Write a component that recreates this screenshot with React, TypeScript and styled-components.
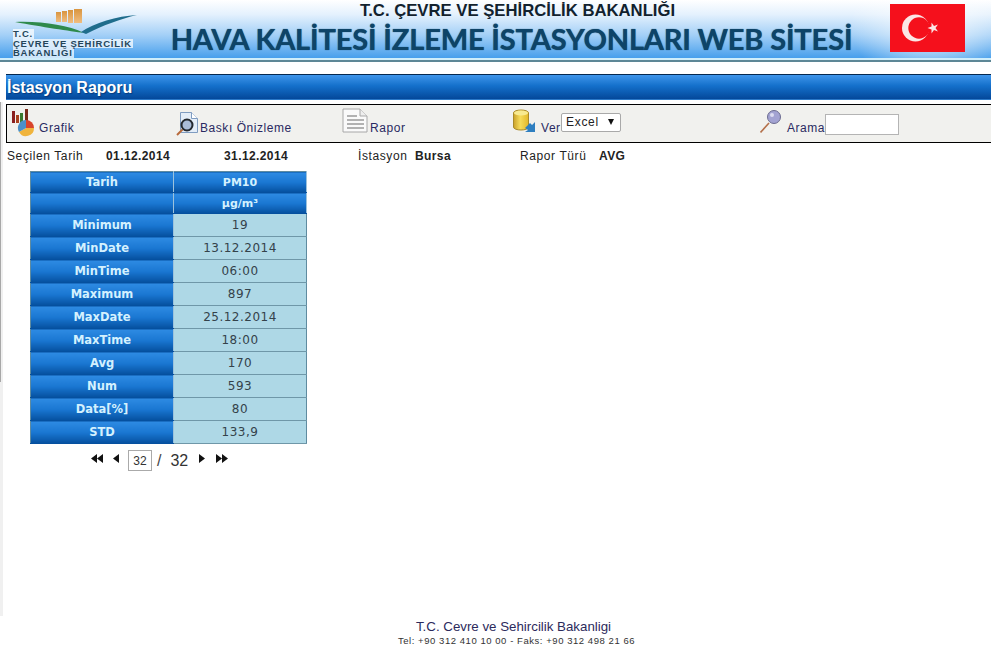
import React from 'react';
import styled, { createGlobalStyle } from 'styled-components';

const GlobalStyle = createGlobalStyle`
  html, body {
    margin: 0;
    padding: 0;
    background: #fff;
    overflow: hidden;
  }
  body {
    font-family: "Liberation Sans", Arial, sans-serif;
  }
`;

const Page = styled.div`
  width: 991px;
  height: 657px;
  display: flex;
  flex-direction: column;
`;

const Header = styled.header`
  height: 58px;
  display: flex;
  align-items: flex-start;
  background:
    radial-gradient(ellipse 80px 60px at 930px 25px, rgba(255, 255, 255, 0.8), rgba(255, 255, 255, 0) 100%),
    linear-gradient(to bottom, #ffffff 0%, #e4f1fd 25%, #a4d0f7 60%, #479fec 100%);
`;

const Logo = styled.div`
  width: 160px;
  height: 58px;
  position: relative;
  flex: none;
`;

const LogoMark = styled.svg`
  display: block;
  position: absolute;
  left: 12px;
  top: 6px;
`;

const LogoText = styled.div`
  position: absolute;
  left: 13px;
  top: 29px;
  font-size: 9.5px;
  line-height: 9.5px;
  font-weight: 700;
  color: #24465a;
  letter-spacing: 0.75px;
  white-space: nowrap;
`;

const LogoLine = styled.div`
  background: rgba(255, 255, 255, 0.72);
  width: fit-content;
  padding-right: 1px;
`;

const HeaderTitles = styled.div`
  width: 700px;
  flex: none;
  display: flex;
  flex-direction: column;
  align-items: center;
  padding-top: 2px;
`;

const Ministry = styled.div`
  margin-left: 15px;
  font-size: 16.7px;
  line-height: 18px;
  font-weight: 700;
  color: #12222e;
  white-space: nowrap;
`;

const SiteTitle = styled.div`
  margin: 1px 0 0 3px;
  font-family: Lato, "Open Sans", sans-serif;
  font-size: 29px;
  line-height: 35px;
  font-weight: 700;
  letter-spacing: -0.15px;
  white-space: nowrap;
  color: #0e4468;
  text-shadow: 0 0 1px #0e4468;
`;

const Flag = styled.svg`
  display: block;
  margin: 4px 0 0 30px;
  flex: none;
`;

const HeaderRule = styled.div`
  height: 4px;
  background: linear-gradient(to bottom, #cfeefb 0%, #cfeefb 40%, #5d8796 40%, #5d8796 100%);
`;

const Content = styled.main`
  flex: 1;
  padding: 12px 0 0 6px;
  position: relative;
  display: flex;
  flex-direction: column;
  &::before {
    content: '';
    position: absolute;
    left: 0;
    top: 40px;
    bottom: 41px;
    width: 3px;
    background: #f0f0f0;
  }
  &::after {
    content: '';
    position: absolute;
    left: 0;
    top: 40px;
    height: 280px;
    width: 1px;
    background: #a8a8a8;
  }
`;

const TitleBar = styled.div`
  height: 26px;
  box-sizing: border-box;
  border-top: 1px solid #05284f;
  border-bottom: 1px solid #2a78c8;
  padding-left: 1px;
  background: linear-gradient(to bottom, #3f95ea 0%, #1470cb 45%, #04489a 100%);
  color: #fff;
  font-size: 16px;
  font-weight: 700;
  line-height: 25px;
  text-shadow: 1px 1px 1px rgba(0, 30, 80, 0.5);
`;

const Toolbar = styled.div`
  margin-top: 4px;
  height: 39px;
  box-sizing: border-box;
  border: 1px solid #000;
  border-right: none;
  background: #f1f1ee;
  display: grid;
  grid-template-columns: 165px 166px 171px 247px 1fr;
  padding-left: 4px;
`;

const ToolItem = styled.div`
  display: flex;
  align-items: flex-end;
  height: 30px;
  position: relative;
  font-size: 12px;
  letter-spacing: 0.55px;
  color: #2a2a62;
  line-height: 14px;
  white-space: nowrap;
`;

const ToolIcon = styled.svg`
  display: block;
  flex: none;
  margin-top: 3px;
  align-self: flex-start;
`;

const FakeSelect = styled.div`
  position: absolute;
  left: 48px;
  top: 8px;
  width: 60px;
  height: 19px;
  box-sizing: border-box;
  border: 1px solid #a9a9a9;
  border-radius: 2px;
  background: #fff;
  font-size: 12px;
  letter-spacing: 0.7px;
  line-height: 17px;
  padding-left: 4px;
  color: #222;
  &::after {
    content: '';
    position: absolute;
    right: 6px;
    top: 5px;
    border-left: 3.5px solid transparent;
    border-right: 3.5px solid transparent;
    border-top: 6px solid #111;
  }
`;

const SearchBox = styled.input`
  width: 74px;
  height: 21px;
  box-sizing: border-box;
  border: 1px solid #b4b4b4;
  background: #fff;
  padding: 0;
`;

const InfoRow = styled.div`
  display: flex;
  height: 15px;
  margin: 6px 0 0 1px;
  font-size: 12px;
  line-height: 15px;
  color: #222;
  white-space: nowrap;
`;

const InfoCell = styled.div<{ $w: number; $bold?: boolean }>`
  width: ${p => p.$w}px;
  flex: none;
  font-weight: ${p => (p.$bold ? 700 : 400)};
  letter-spacing: ${p => (p.$bold ? 0.4 : 0.6)}px;
`;

const DataTable = styled.table`
  margin: 7px 0 0 24px;
  border-collapse: collapse;
  width: 276px;
  table-layout: fixed;
  font-family: "DejaVu Sans", Verdana, sans-serif;
  font-size: 12px;
  border: 1px solid #5f8ba0;
`;

const HeadCell = styled.td<{ $small?: boolean }>`
  padding: 0;
  height: ${p => (p.$small ? 20 : 22)}px;
  text-align: center;
  font-weight: 700;
  font-size: ${p => (p.$small ? 11 : 11.5)}px;
  color: #d4f1fe;
  background: linear-gradient(to bottom, #2e8be3 0%, #1a77d2 50%, #05509f 100%);
  border-bottom: 1px solid #05509f;
  border-right: 1px solid #9cc2dc;
`;

const TopCell = styled(HeadCell)`
  height: 20px;
`;

const ValueCell = styled.td`
  padding: 0;
  height: 22px;
  text-align: center;
  background: #aed8e6;
  color: #34424a;
  letter-spacing: 0.5px;
  border-bottom: 1px solid #6f97a8;
`;

const Pager = styled.div`
  margin: 6px 0 0 85px;
  display: flex;
  align-items: center;
  height: 21px;
  color: #333;
`;

const PagerArrow = styled.svg<{ $gap: number }>`
  display: block;
  flex: none;
  margin: 0 ${p => p.$gap}px 4px 0;
`;

const PageInput = styled.div`
  width: 24px;
  height: 21px;
  box-sizing: border-box;
  border: 1px solid #aaa;
  font-size: 12px;
  line-height: 20px;
  text-align: center;
  color: #333;
`;

const PageSlash = styled.span`
  font-size: 16px;
  margin-left: 5px;
  color: #444;
`;

const PageTotal = styled.span`
  font-size: 16px;
  margin: 0 11px 0 9px;
  color: #333;
`;

const Footer = styled.footer`
  margin-top: auto;
  padding: 0 0 10px 36px;
  text-align: center;
  color: #2c2a5c;
`;

const FooterName = styled.div`
  font-size: 13.3px;
  line-height: 14px;
  margin: 0 6px 1px 0;
`;

const FooterContact = styled.div`
  font-size: 9.5px;
  line-height: 12px;
  letter-spacing: 0.55px;
  color: #333;
`;

const rows: [string, string][] = [
  ['Minimum', '19'],
  ['MinDate', '13.12.2014'],
  ['MinTime', '06:00'],
  ['Maximum', '897'],
  ['MaxDate', '25.12.2014'],
  ['MaxTime', '18:00'],
  ['Avg', '170'],
  ['Num', '593'],
  ['Data[%]', '80'],
  ['STD', '133,9'],
];

const App: React.FC = () => (
  <>
    <GlobalStyle />
    <Page>
      <Header>
        <Logo>
          <LogoMark width="130" height="28" viewBox="0 0 130 28">
            <defs>
              <linearGradient id="bars" x1="0" y1="0" x2="0" y2="1">
                <stop offset="0" stopColor="#d9953f" />
                <stop offset="1" stopColor="#f0bd80" />
              </linearGradient>
            </defs>
            <rect x="44" y="6" width="5" height="10" fill="url(#bars)" />
            <rect x="50" y="5" width="5" height="11" fill="url(#bars)" />
            <rect x="56" y="4" width="5" height="13" fill="url(#bars)" />
            <rect x="62" y="3" width="8" height="14" fill="url(#bars)" />
            <path d="M3 16 C30 15 55 19 72 27 C58 25 30 21 3 16Z" fill="#2f8a4c" />
            <path d="M69 26 C82 17 105 10 125 9 C108 13 92 19 74 28Z" fill="#1f6d8c" />
          </LogoMark>
          <LogoText>
            <LogoLine>T.C.</LogoLine>
            <LogoLine>ÇEVRE VE ŞEHİRCİLİK</LogoLine>
            <LogoLine>BAKANLIĞI</LogoLine>
          </LogoText>
        </Logo>
        <HeaderTitles>
          <Ministry>T.C. ÇEVRE VE ŞEHİRCİLİK BAKANLIĞI</Ministry>
          <SiteTitle>HAVA KALİTESİ İZLEME İSTASYONLARI WEB SİTESİ</SiteTitle>
        </HeaderTitles>
        <Flag width="75" height="48" viewBox="0 0 75 48">
          <rect width="75" height="48" fill="#f5101c" />
          <circle cx="25.5" cy="24" r="13.5" fill="#fbe6e6" />
          <circle cx="29" cy="24" r="10.7" fill="#f5101c" />
          <polygon
            points="37.5,24 41.5,22.6 41.5,18.5 44,21.9 48,20.6 45.5,24 48,27.4 44,26.1 41.5,29.5 41.5,25.4"
            fill="#fbe6e6"
          />
        </Flag>
      </Header>
      <HeaderRule />
      <Content>
        <TitleBar>İstasyon Raporu</TitleBar>
        <Toolbar>
          <ToolItem>
            <ToolIcon width="28" height="29" viewBox="0 0 28 29">
              <rect x="1" y="3" width="3" height="12" fill="#8a1f1f" />
              <rect x="5" y="7" width="3" height="8" fill="#a8401f" />
              <rect x="9" y="5" width="3" height="10" fill="#3a7a30" />
              <rect x="14" y="1" width="3" height="12" fill="#7a2a1a" />
              <path d="M15 20 V12 a8 8 0 0 1 8 8z" fill="#d8442a" />
              <path d="M23 20 a8 8 0 0 1 -15 4 l7 -4z" fill="#f0b43c" />
              <path d="M8 24 a8 8 0 0 1 7 -12 v8z" fill="#4a90c8" />
            </ToolIcon>
            <span>Grafik</span>
          </ToolItem>
          <ToolItem>
            <ToolIcon width="24" height="28" viewBox="0 0 24 28">
              <path d="M4.5 4.5 h11 l6 6 v14 h-17z" fill="#e3edf8" stroke="#7f9cc0" />
              <path d="M15.5 4.5 v6 h6" fill="#fff" stroke="#7f9cc0" />
              <path d="M6.5 21.5 L1 27" stroke="#b86a3a" strokeWidth="2" />
              <circle cx="11" cy="17" r="5.5" fill="#a9bcd8" stroke="#23282e" strokeWidth="2" />
            </ToolIcon>
            <span>Baskı Önizleme</span>
          </ToolItem>
          <ToolItem>
            <ToolIcon width="28" height="25" viewBox="0 0 28 25">
              <path d="M1 1 h17 l7 7 v16 h-24z" fill="#fafafa" stroke="#a8a8a8" />
              <path d="M18 1 v7 h7" fill="#eee" stroke="#a8a8a8" />
              <path d="M5 8 h10 M5 12 h17 M5 16 h17 M5 20 h17" stroke="#9a9a9a" strokeWidth="1.4" />
            </ToolIcon>
            <span>Rapor</span>
          </ToolItem>
          <ToolItem>
            <ToolIcon width="28" height="26" viewBox="0 0 28 26">
              <defs>
                <linearGradient id="db" x1="0" y1="0" x2="1" y2="0">
                  <stop offset="0" stopColor="#c9a12a" />
                  <stop offset="0.45" stopColor="#f6dc5a" />
                  <stop offset="1" stopColor="#e3b82a" />
                </linearGradient>
              </defs>
              <path d="M0.5 5 C0.5 1 15.5 1 15.5 5 V19 C15.5 23 0.5 23 0.5 19Z" fill="url(#db)" stroke="#a98a2a" />
              <ellipse cx="8" cy="5" rx="7" ry="2.6" fill="#f8ea90" />
              <path d="M12 20 l5 -5 2 2 3 -3 v10 h-10 l3 -2z" fill="#2f7fc0" />
            </ToolIcon>
            <span>Ver</span>
            <FakeSelect>Excel</FakeSelect>
          </ToolItem>
          <ToolItem>
            <ToolIcon width="27" height="26" viewBox="0 0 27 26">
              <path d="M9 15 L0.5 24.5" stroke="#b4704a" strokeWidth="1.6" />
              <circle cx="14" cy="9" r="6.5" fill="#a3a3d2" stroke="#6c6c90" />
              <circle cx="12" cy="7" r="2" fill="#dcdcf0" />
            </ToolIcon>
            <span>Arama</span>
            <SearchBox />
          </ToolItem>
        </Toolbar>
        <InfoRow>
          <InfoCell $w={99}>Seçilen Tarih</InfoCell>
          <InfoCell $w={118} $bold>01.12.2014</InfoCell>
          <InfoCell $w={134} $bold>31.12.2014</InfoCell>
          <InfoCell $w={57}>İstasyon</InfoCell>
          <InfoCell $w={105} $bold>Bursa</InfoCell>
          <InfoCell $w={79}>Rapor Türü</InfoCell>
          <InfoCell $w={60} $bold>AVG</InfoCell>
        </InfoRow>
        <DataTable>
          <colgroup>
            <col width={143} />
            <col width={133} />
          </colgroup>
          <tbody>
            <tr>
              <TopCell>Tarih</TopCell>
              <HeadCell $small>PM10</HeadCell>
            </tr>
            <tr>
              <TopCell />
              <HeadCell $small>µg/m³</HeadCell>
            </tr>
            {rows.map(([label, value]) => (
              <tr key={label}>
                <HeadCell>{label}</HeadCell>
                <ValueCell>{value}</ValueCell>
              </tr>
            ))}
          </tbody>
        </DataTable>
        <Pager>
          <PagerArrow $gap={10} width="12" height="9" viewBox="0 0 12 9">
            <path d="M6 0 V9 L0 4.5Z M12 0 V9 L6 4.5Z" fill="#111" />
          </PagerArrow>
          <PagerArrow $gap={9} width="6" height="9" viewBox="0 0 6 9">
            <path d="M6 0 V9 L0 4.5Z" fill="#111" />
          </PagerArrow>
          <PageInput>32</PageInput>
          <PageSlash>/</PageSlash>
          <PageTotal>32</PageTotal>
          <PagerArrow $gap={11} width="6" height="9" viewBox="0 0 6 9">
            <path d="M0 0 V9 L6 4.5Z" fill="#111" />
          </PagerArrow>
          <PagerArrow $gap={0} width="12" height="9" viewBox="0 0 12 9">
            <path d="M0 0 V9 L6 4.5Z M6 0 V9 L12 4.5Z" fill="#111" />
          </PagerArrow>
        </Pager>
        <Footer>
          <FooterName>T.C. Cevre ve Sehircilik Bakanligi</FooterName>
          <FooterContact>Tel: +90 312 410 10 00 - Faks: +90 312 498 21 66</FooterContact>
        </Footer>
      </Content>
    </Page>
  </>
);

export default App;
